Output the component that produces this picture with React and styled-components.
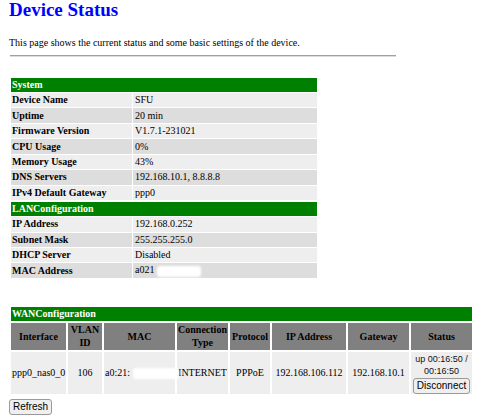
import styled, { createGlobalStyle } from "styled-components";

const GlobalStyle = createGlobalStyle`
  body {
    margin: 0;
    background: #ffffff;
    font-family: "Liberation Serif", "Times New Roman", serif;
    color: #000000;
  }
`;

const systemInfo = [
  ["Device Name", "SFU"],
  ["Uptime", "20 min"],
  ["Firmware Version", "V1.7.1-231021"],
  ["CPU Usage", "0%"],
  ["Memory Usage", "43%"],
  ["DNS Servers", "192.168.10.1, 8.8.8.8"],
  ["IPv4 Default Gateway", "ppp0"],
];

const wanColumns = [
  ["Interface", 55],
  ["VLAN ID", 34],
  ["MAC", 71],
  ["Connection Type", 51],
  ["Protocol", 40],
  ["IP Address", 74],
  ["Gateway", 61],
  ["Status", 61],
];

function InfoBlock({ title, rows }) {
  return (
    <InfoTable>
      <colgroup>
        <LabelCol />
        <col />
      </colgroup>
      <tbody>
        <tr>
          <SectionHead colSpan={2}>{title}</SectionHead>
        </tr>
        {rows.map(([label, value], i) => (
          <InfoRow key={label} $dark={i % 2 === 1}>
            <Label>{label}</Label>
            <Value>{value}</Value>
          </InfoRow>
        ))}
      </tbody>
    </InfoTable>
  );
}

export default function App() {
  const lanInfo = [
    ["IP Address", "192.168.0.252"],
    ["Subnet Mask", "255.255.255.0"],
    ["DHCP Server", "Disabled"],
    ["MAC Address", <>a021<Hidden $w={44} /></>],
  ];

  return (
    <Page>
      <GlobalStyle />
      <Title>Device Status</Title>
      <Intro>This page shows the current status and some basic settings of the device.</Intro>
      <Rule />

      <InfoBlock title="System" rows={systemInfo} />
      <InfoBlock title="LANConfiguration" rows={lanInfo} />

      <WanTable>
        <colgroup>
          {wanColumns.map(([name, w]) => (
            <col key={name} style={{ width: w }} />
          ))}
        </colgroup>
        <tbody>
          <tr>
            <SectionHead colSpan={8}>WANConfiguration</SectionHead>
          </tr>
          <tr>
            {wanColumns.map(([name]) => (
              <ColHead key={name}>{name}</ColHead>
            ))}
          </tr>
          <DataRow>
            <DataCell>ppp0_nas0_0</DataCell>
            <DataCell>106</DataCell>
            <DataCell $left>a0:21:<Hidden $w={46} /></DataCell>
            <DataCell>INTERNET</DataCell>
            <DataCell>PPPoE</DataCell>
            <DataCell>192.168.106.112</DataCell>
            <DataCell>192.168.10.1</DataCell>
            <StatusCell>
              <StatusText>up 00:16:50 /<br />00:16:50</StatusText>
              <SmallButton type="button">Disconnect</SmallButton>
            </StatusCell>
          </DataRow>
        </tbody>
      </WanTable>
      <SmallButton type="button">Refresh</SmallButton>
    </Page>
  );
}

const Page = styled.div`
  padding: 0 9px;
`;

const Title = styled.h2`
  margin: 0;
  font-size: 19px;
  line-height: 20px;
  font-weight: bold;
  color: #0000ff;
`;

const Intro = styled.p`
  margin: 17px 0 0;
  font-size: 10px;
  line-height: 12px;
`;

const Rule = styled.hr`
  width: 386px;
  height: 0;
  margin: 6px 0 0 1px;
  border: none;
  border-top: 1px solid #a0a0a0;
  border-bottom: 1px solid #dcdcdc;
`;

const InfoTable = styled.table`
  width: 308px;
  margin-left: 1px;
  border-spacing: 1px;
  table-layout: fixed;
  font-size: 10px;
  line-height: 12px;

  &:first-of-type {
    margin-top: 20px;
  }
`;

const LabelCol = styled.col`
  width: 121px;
`;

const SectionHead = styled.th`
  height: 14px;
  padding: 0 1px;
  background: #008000;
  color: #ffffff;
  text-align: left;
  font-weight: bold;
`;

const InfoRow = styled.tr`
  background: ${(p) => (p.$dark ? "#dddddd" : "#eeeeee")};
`;

const Label = styled.td`
  height: 14.45px;
  padding: 0 1px;
  font-weight: bold;
  white-space: nowrap;
`;

const Value = styled.td`
  height: 14.45px;
  padding: 0 2px;
  white-space: nowrap;
`;

const Hidden = styled.span`
  display: inline-block;
  width: ${(p) => p.$w}px;
  height: 11px;
  margin-left: 3px;
  vertical-align: middle;
  background: #ffffff;
  border-radius: 3px;
  filter: blur(1px);
`;

const WanTable = styled.table`
  width: 465px;
  margin-top: 26px;
  border-spacing: 2px;
  table-layout: fixed;
  font-size: 10px;
  line-height: 12px;
`;

const ColHead = styled.th`
  height: 27px;
  padding: 0;
  background: #808080;
  color: #000000;
  font-weight: bold;
  line-height: 13.4px;
  text-align: center;
`;

const DataRow = styled.tr`
  background: #eeeeee;
`;

const DataCell = styled.td`
  height: 42.5px;
  padding: 0 1px;
  text-align: ${(p) => (p.$left ? "left" : "center")};
  white-space: nowrap;
  overflow: visible;
`;

const StatusCell = styled.td`
  padding: 1px 0 0;
  text-align: center;
  vertical-align: top;
`;

const StatusText = styled.div`
  font-family: "Liberation Sans", Arial, sans-serif;
  font-size: 9px;
  line-height: 12.6px;
  color: #111111;
`;

const SmallButton = styled.button`
  display: inline-block;
  height: 16px;
  margin: 0;
  padding: 0 3px;
  border: 1px solid #9a9a9a;
  border-radius: 3px;
  background: #efefef;
  color: #000000;
  font-family: "Liberation Sans", Arial, sans-serif;
  font-size: 10px;
  line-height: 14px;
`;
